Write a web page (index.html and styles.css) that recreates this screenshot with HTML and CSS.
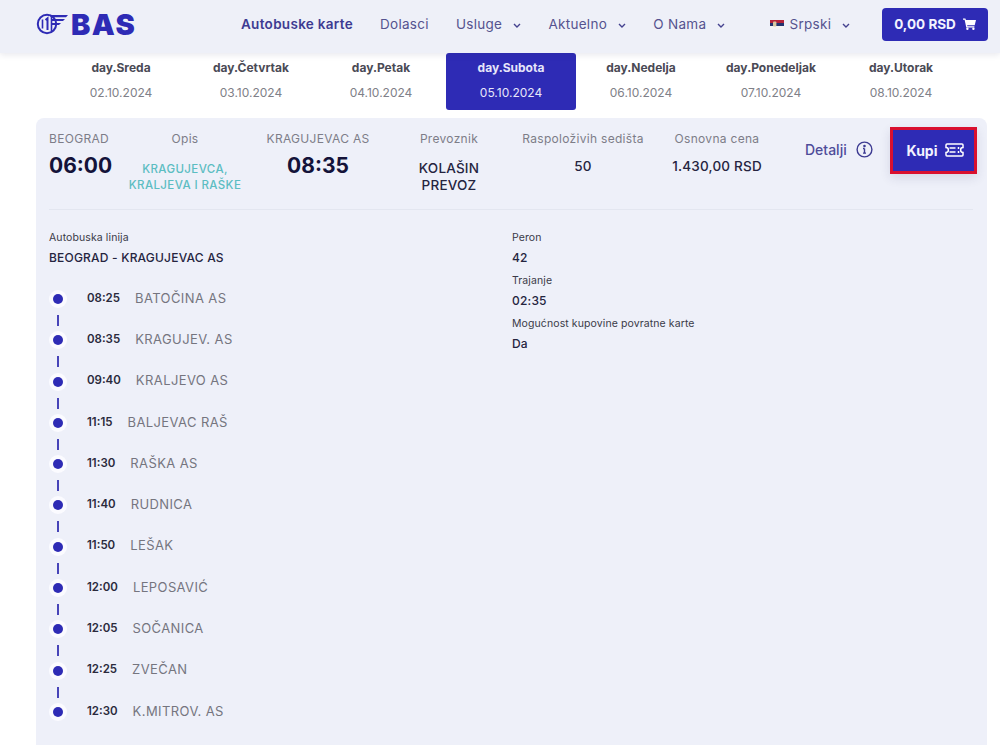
FILE: index.html
```html
<!DOCTYPE html>
<html lang="sr">
<head>
  <meta charset="UTF-8" />
  <meta name="viewport" content="width=device-width, initial-scale=1.0"/>
  <title>BAS - Autobuske karte</title>
  <link rel="stylesheet" href="styles.css">
</head>
<body>
  <header class="topbar">
    <a class="logo">
      <svg class="logo-mark" width="32" height="22" viewBox="0 0 32 22" fill="none" stroke="#2e2bb5">
        <circle cx="11" cy="11" r="9.2" stroke-width="2"/>
        <path d="M6.5 6.5v9M15.5 4v14" stroke-width="1.6"/>
        <path d="M9.5 7l2-1.6V17" stroke-width="2"/>
        <path d="M13 2h19l-2 2.2H15zM16 6h13l-2 2H16zM16 10h9l-2 2h-7z" fill="#2e2bb5" stroke="none"/>
      </svg>
      <span class="logo-text">BAS</span>
    </a>
    <nav class="nav">
      <a class="nav-link nav-active">Autobuske karte</a>
      <a class="nav-link">Dolasci</a>
      <a class="nav-link">Usluge <svg class="chev" width="8" height="5" viewBox="0 0 8 5"><path d="M1 1l3 3 3-3" fill="none" stroke="#44428f" stroke-width="1.4"/></svg></a>
      <a class="nav-link">Aktuelno <svg class="chev" width="8" height="5" viewBox="0 0 8 5"><path d="M1 1l3 3 3-3" fill="none" stroke="#44428f" stroke-width="1.4"/></svg></a>
      <a class="nav-link">O Nama <svg class="chev" width="8" height="5" viewBox="0 0 8 5"><path d="M1 1l3 3 3-3" fill="none" stroke="#44428f" stroke-width="1.4"/></svg></a>
    </nav>
    <a class="nav-link lang">
      <svg width="14" height="9" viewBox="0 0 14 9">
        <rect width="14" height="3" fill="#b5243a"/>
        <rect y="3" width="14" height="3" fill="#24336f"/>
        <rect y="6" width="14" height="3" fill="#f4f4f4"/>
        <rect x="3" y="1.5" width="3.4" height="5" rx="1" fill="#d9c9a0"/>
      </svg>
      Srpski <svg class="chev" width="8" height="5" viewBox="0 0 8 5"><path d="M1 1l3 3 3-3" fill="none" stroke="#44428f" stroke-width="1.4"/></svg>
    </a>
    <a class="cart">0,00 RSD
      <svg width="13" height="12" viewBox="0 0 13 12" fill="#fff">
        <path d="M0 .5h2.4l.5 1.5H13l-1.3 5.2H4.1l.3 1H11.4v1.2H3.3L1.6 1.7H0z"/>
        <circle cx="4.4" cy="10.7" r="1.2"/>
        <circle cx="10.4" cy="10.7" r="1.2"/>
      </svg>
    </a>
  </header>

  <div class="days">
    <div class="day"><b>day.Sreda</b><span>02.10.2024</span></div>
    <div class="day"><b>day.Četvrtak</b><span>03.10.2024</span></div>
    <div class="day"><b>day.Petak</b><span>04.10.2024</span></div>
    <div class="day day-active"><b>day.Subota</b><span>05.10.2024</span></div>
    <div class="day"><b>day.Nedelja</b><span>06.10.2024</span></div>
    <div class="day"><b>day.Ponedeljak</b><span>07.10.2024</span></div>
    <div class="day"><b>day.Utorak</b><span>08.10.2024</span></div>
  </div>

  <section class="card">
    <div class="summary">
      <div class="col col-left">
        <div class="label">BEOGRAD</div>
        <div class="time">06:00</div>
      </div>
      <div class="col">
        <div class="label">Opis</div>
        <div class="desc">KRAGUJEVCA, KRALJEVA I RAŠKE</div>
      </div>
      <div class="col">
        <div class="label">KRAGUJEVAC AS</div>
        <div class="time">08:35</div>
      </div>
      <div class="col">
        <div class="label">Prevoznik</div>
        <div class="value value-carrier">KOLAŠIN PREVOZ</div>
      </div>
      <div class="col">
        <div class="label">Raspoloživih sedišta</div>
        <div class="value">50</div>
      </div>
      <div class="col">
        <div class="label">Osnovna cena</div>
        <div class="value">1.430,00 RSD</div>
      </div>
      <a class="details">Detalji
        <svg width="17" height="17" viewBox="0 0 17 17" fill="none" stroke="#3d3b92" stroke-width="1.4">
          <circle cx="8.5" cy="8.5" r="7.4"/>
          <path d="M8.5 7.5v4.6M7 7.5h1.5M7 12.1h3"/>
          <circle cx="8.5" cy="5" r=".6" fill="#3d3b92"/>
        </svg>
      </a>
      <a class="buy">Kupi
        <svg width="19" height="14" viewBox="0 0 19 14" fill="none" stroke="#fff" stroke-width="1.5">
          <path d="M2 1h15a1 1 0 0 1 1 1v2.6a2.4 2.4 0 0 0 0 4.8V12a1 1 0 0 1-1 1H2a1 1 0 0 1-1-1V9.4a2.4 2.4 0 0 0 0-4.8V2a1 1 0 0 1 1-1z"/>
          <path d="M4.5 5h6M4.5 9h6M13.5 4v2M13.5 8v2"/>
        </svg>
      </a>
    </div>

    <div class="info">
      <div class="route">
        <div class="field-label">Autobuska linija</div>
        <div class="field-value">BEOGRAD - KRAGUJEVAC AS</div>
        <ul class="stops">
          <li class="stop"><i class="dot"></i><span class="stop-time">08:25</span><span class="stop-name">BATOČINA AS</span></li>
          <li class="stop"><i class="dot"></i><span class="stop-time">08:35</span><span class="stop-name">KRAGUJEV. AS</span></li>
          <li class="stop"><i class="dot"></i><span class="stop-time">09:40</span><span class="stop-name">KRALJEVO AS</span></li>
          <li class="stop"><i class="dot"></i><span class="stop-time">11:15</span><span class="stop-name">BALJEVAC RAŠ</span></li>
          <li class="stop"><i class="dot"></i><span class="stop-time">11:30</span><span class="stop-name">RAŠKA AS</span></li>
          <li class="stop"><i class="dot"></i><span class="stop-time">11:40</span><span class="stop-name">RUDNICA</span></li>
          <li class="stop"><i class="dot"></i><span class="stop-time">11:50</span><span class="stop-name">LEŠAK</span></li>
          <li class="stop"><i class="dot"></i><span class="stop-time">12:00</span><span class="stop-name">LEPOSAVIĆ</span></li>
          <li class="stop"><i class="dot"></i><span class="stop-time">12:05</span><span class="stop-name">SOČANICA</span></li>
          <li class="stop"><i class="dot"></i><span class="stop-time">12:25</span><span class="stop-name">ZVEČAN</span></li>
          <li class="stop"><i class="dot"></i><span class="stop-time">12:30</span><span class="stop-name">K.MITROV. AS</span></li>
        </ul>
      </div>
      <div class="facts">
        <div class="field-label">Peron</div>
        <div class="field-value">42</div>
        <div class="field-label">Trajanje</div>
        <div class="field-value">02:35</div>
        <div class="field-label">Mogućnost kupovine povratne karte</div>
        <div class="field-value">Da</div>
      </div>
    </div>
  </section>
</body>
</html>
```

FILE: styles.css
```css
* {
  box-sizing: border-box;
}

html, body {
  height: 745px;
  overflow: hidden;
}

body {
  background-color: #fff;
  font-family: Inter, 'Open Sans', sans-serif;
  margin: 0;
  color: #1b1a3f;
}

.topbar {
  position: relative;
  z-index: 1;
  display: flex;
  align-items: center;
  height: 53px;
  padding: 0 12px 5px 36px;
  background-color: #eef0f8;
  box-shadow: 0 2px 6px rgba(40, 40, 90, 0.1);
}

.logo {
  display: flex;
  align-items: center;
  gap: 3px;
  width: 205px;
}

.logo-text {
  font-size: 29px;
  font-weight: 900;
  letter-spacing: 1.5px;
  color: #2e2bb5;
}

.nav {
  display: flex;
  gap: 27px;
}

.nav-link {
  font-size: 13.5px;
  color: #55538f;
  letter-spacing: 0.3px;
  white-space: nowrap;
}

.nav-active {
  font-weight: 600;
  color: #3d3b92;
}

.chev {
  margin: 0 0 1px 7px;
}

.lang {
  margin-left: 45px;
}

.lang svg:first-child {
  margin-right: 1px;
}

.cart {
  display: flex;
  align-items: center;
  justify-content: center;
  gap: 7px;
  width: 106px;
  height: 33px;
  margin-left: auto;
  background-color: #2e2bb5;
  border-radius: 4px;
  font-size: 13.5px;
  font-weight: 700;
  color: #f3f3ff;
}

.days {
  display: grid;
  grid-template-columns: repeat(7, 130px);
  height: 57px;
  margin: 0 0 8px 56px;
}

.day {
  display: flex;
  flex-direction: column;
  align-items: center;
  padding-top: 7px;
  font-size: 12px;
}

.day b {
  font-weight: 700;
  color: #4a4a55;
}

.day span {
  margin-top: 10px;
  color: #808088;
}

.day-active {
  background-color: #2e2bb5;
  border-radius: 3px;
}

.day-active b,
.day-active span {
  color: #e6e6fa;
}

.card {
  height: 627px;
  margin: 0 13px 0 36px;
  padding: 0 14px 0 13px;
  background-color: #eef0f9;
  border-radius: 8px 8px 0 0;
}

.summary {
  display: grid;
  grid-template-columns: 73px 126px 140px 122px 146px 122px 111px 1fr;
  height: 92px;
  padding-top: 13px;
  border-bottom: 1px solid #e3e6f0;
}

.col {
  text-align: center;
}

.col-left {
  text-align: left;
}

.label {
  font-size: 12px;
  line-height: 15px;
  letter-spacing: 0.3px;
  color: #7d7d88;
}

.time {
  margin-top: 7px;
  font-size: 21px;
  line-height: 26px;
  font-weight: 700;
  color: #14133a;
}

.desc {
  width: 124px;
  margin: 15px auto 0;
  font-size: 11.5px;
  line-height: 16px;
  font-weight: 500;
  letter-spacing: 0.4px;
  color: #5cbdc2;
}

.value {
  margin-top: 12px;
  font-size: 13.5px;
  line-height: 17px;
  font-weight: 500;
  letter-spacing: 0.2px;
  color: #25243f;
}

.value-carrier {
  width: 80px;
  margin: 14px auto 0;
}

.details {
  display: flex;
  align-items: center;
  gap: 9px;
  height: 20px;
  margin: 8px 0 0 27px;
  font-size: 14px;
  font-weight: 500;
  color: #4e4c9a;
}

.buy {
  display: flex;
  align-items: center;
  justify-content: center;
  gap: 8px;
  width: 87px;
  height: 47px;
  margin: -4px 0 0 1px;
  padding: 0 0 1px 4px;
  background-color: #2e2bb5;
  border: 3px solid #d9102f;
  font-size: 14px;
  font-weight: 700;
  color: #f3f3ff;
  box-shadow: 0 4px 10px rgba(40, 40, 90, 0.12);
}

.info {
  display: flex;
  padding-top: 21px;
}

.route {
  width: 463px;
}

.field-label {
  font-size: 10.5px;
  line-height: 13px;
  letter-spacing: 0.1px;
  color: #3a3a48;
}

.field-value {
  margin: 7px 0 9px;
  font-size: 12px;
  line-height: 14px;
  font-weight: 500;
  letter-spacing: 0.2px;
  color: #25243f;
}

.stops {
  list-style: none;
  margin: 12px 0 0;
  padding: 0;
}

.stop {
  position: relative;
  display: flex;
  align-items: center;
  gap: 15px;
  height: 41.3px;
  padding-left: 38px;
}

.stop:not(:last-child)::after {
  content: "";
  position: absolute;
  left: 8px;
  top: 38px;
  width: 2px;
  height: 11px;
  background-color: #4744b8;
}

.dot {
  position: absolute;
  left: 4px;
  top: 17px;
  width: 10px;
  height: 10px;
  border-radius: 50%;
  background-color: #2e2bb5;
  box-shadow: 0 0 0 4px #fbfbff;
}

.stop-time {
  font-size: 11.5px;
  font-weight: 600;
  color: #2a2a3c;
}

.stop-name {
  font-size: 13px;
  letter-spacing: 0.4px;
  color: #75757f;
}
```
